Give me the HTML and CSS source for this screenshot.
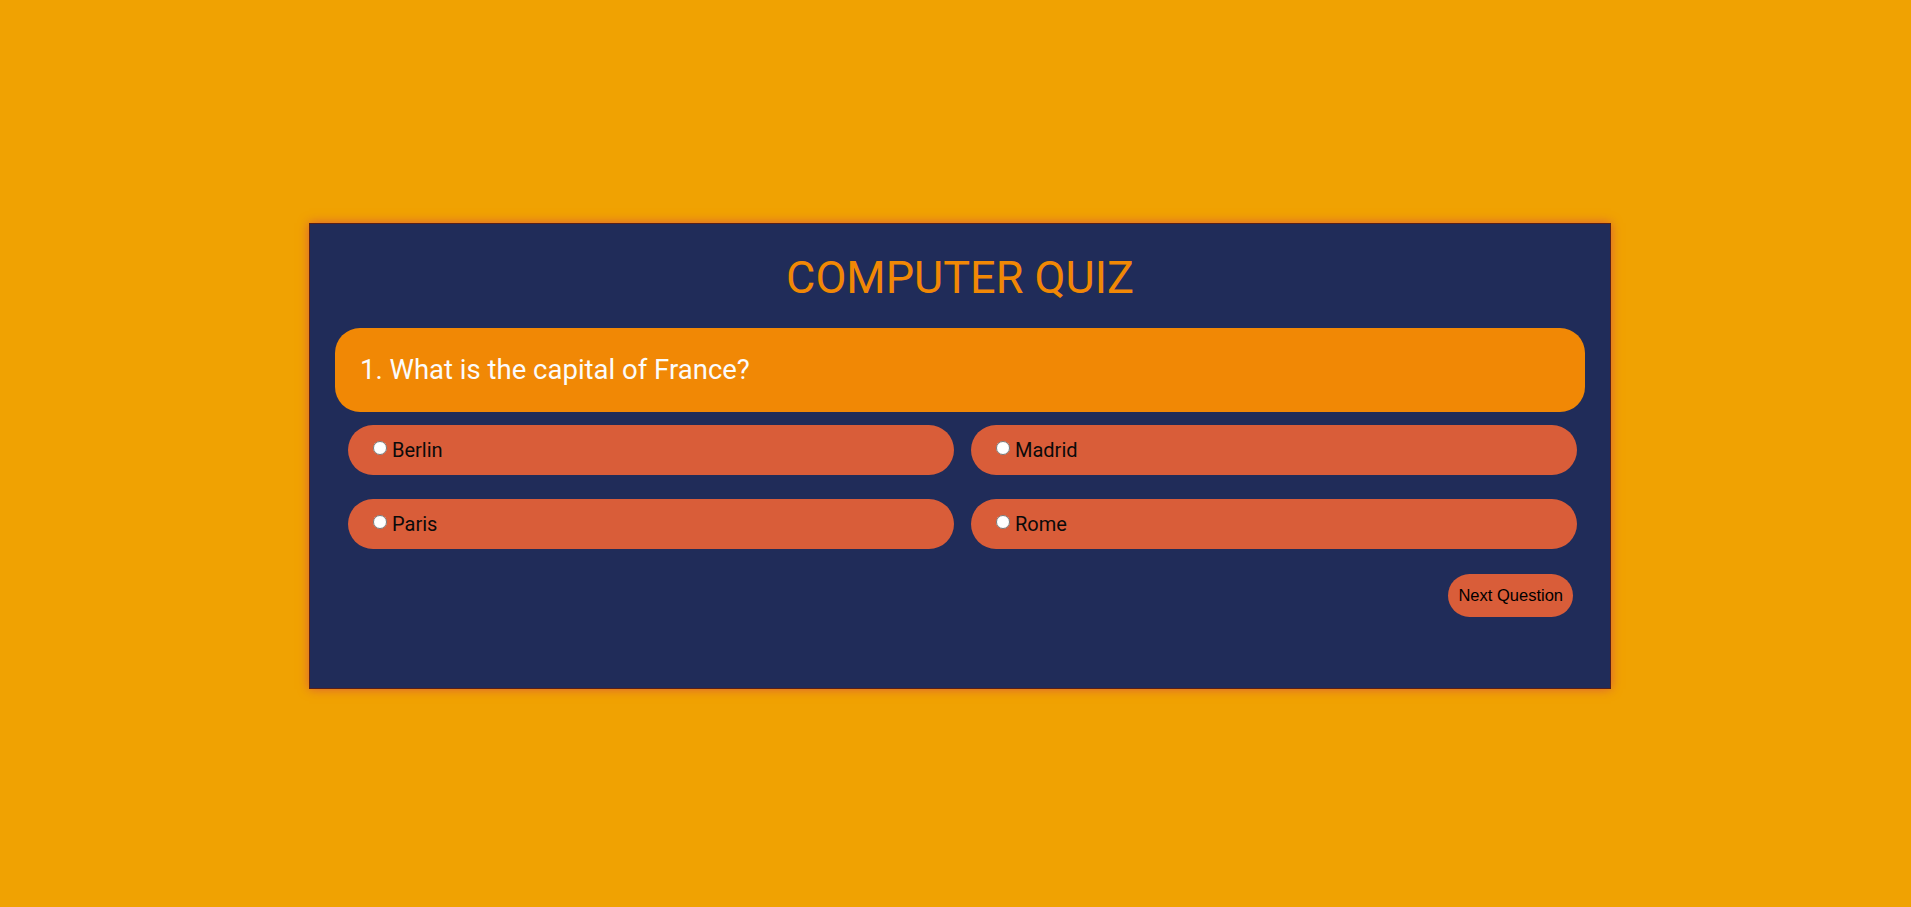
FILE: index.html
```html
<!DOCTYPE html>
<html lang="en">
<head>
<meta charset="utf-8">
<title>Computer Quiz</title>
<link rel="stylesheet" href="styles.css">
</head>
<body>
<main class="page">
  <section class="quiz">
    <h1 class="quiz-title">COMPUTER QUIZ</h1>
    <div class="question">1. What is the capital of France?</div>
    <div class="options">
      <label class="option"><input type="radio" name="answer" value="Berlin">Berlin</label>
      <label class="option"><input type="radio" name="answer" value="Madrid">Madrid</label>
      <label class="option"><input type="radio" name="answer" value="Paris">Paris</label>
      <label class="option"><input type="radio" name="answer" value="Rome">Rome</label>
    </div>
    <div class="actions">
      <button class="next-btn" type="button">Next Question</button>
    </div>
  </section>
</main>
</body>
</html>
```

FILE: styles.css
```css
* {
  box-sizing: border-box;
}

html, body {
  margin: 0;
  padding: 0;
}

body {
  background: #f0a202;
  font-family: Roboto, "Liberation Sans", sans-serif;
}

.page {
  min-height: 907px;
  padding: 5px 0 0 9px;
  display: flex;
  justify-content: center;
  align-items: center;
}

.quiz {
  width: 1302px;
  background: #202c59;
  border: 1px solid #581f18;
  box-shadow: 0 0 10px #d95d39;
  padding: 0 25px 71px;
}

.quiz-title {
  margin: 28px 0 24px;
  font-size: 45px;
  line-height: 52px;
  font-weight: 400;
  text-align: center;
  color: #f18805;
}

.question {
  background: #f18805;
  color: #fbfbfb;
  border-radius: 25px;
  padding: 26px 24px 26px 25px;
  font-size: 27.5px;
  line-height: 32px;
}

.options {
  display: grid;
  grid-template-columns: 1fr 1fr;
  column-gap: 17px;
  row-gap: 24px;
  margin: 13px 8px 0 13px;
}

.option {
  display: block;
  background: #d95d39;
  border-radius: 25px;
  padding: 13px 0 13px 20px;
  font-size: 20px;
  line-height: 24px;
  color: #0a0a0a;
}

.option input {
  width: 14px;
  height: 14px;
  margin: 3px 5px 0 5px;
  vertical-align: 2px;
}

.actions {
  display: flex;
  justify-content: flex-end;
  margin-top: 25px;
  padding-right: 12px;
}

.next-btn {
  background: #d95d39;
  border: none;
  border-radius: 22px;
  padding: 12px 10px;
  font-family: "Liberation Sans", Arial, sans-serif;
  font-size: 16.5px;
  line-height: 19px;
  color: #000;
}
```
